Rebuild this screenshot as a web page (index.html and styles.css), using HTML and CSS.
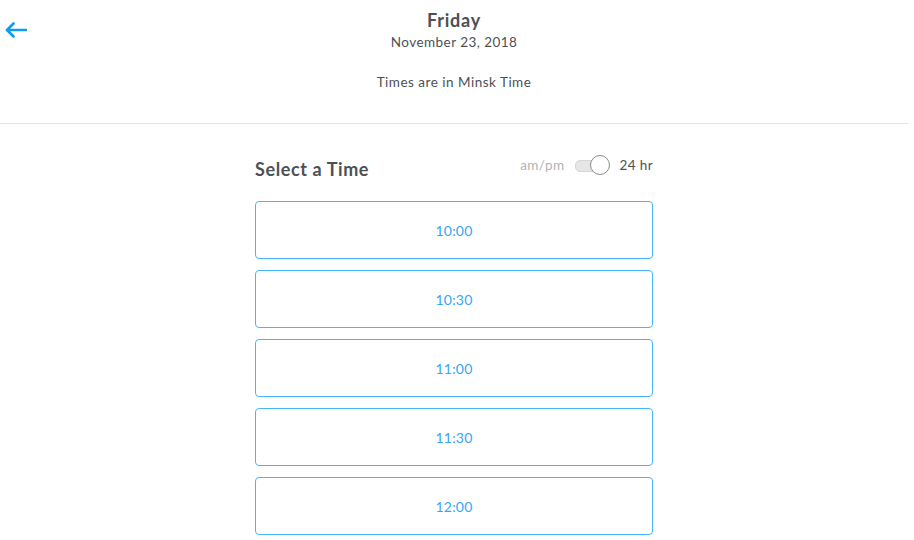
FILE: index.html
```html
<!DOCTYPE html>
<html>
<head>
<meta charset="utf-8">
<link rel="stylesheet" href="styles.css">
</head>
<body>
<div class="page">
  <header class="header">
    <button class="back" aria-label="Back">
      <svg width="22" height="16" viewBox="0 0 22 16"><path d="M21 8H2.5M8.5 1.5L2 8l6.5 6.5" fill="none" stroke="#0d9bf2" stroke-width="2.6" stroke-linecap="round" stroke-linejoin="round"/></svg>
    </button>
    <div class="day">Friday</div>
    <div class="date">November 23, 2018</div>
    <div class="tz">Times are in Minsk Time</div>
  </header>
  <main class="column">
    <div class="column-head">
      <h2 class="title">Select a Time</h2>
      <div class="format">
        <span class="fmt-off">am/pm</span>
        <span class="toggle"><span class="knob"></span></span>
        <span class="fmt-on">24 hr</span>
      </div>
    </div>
    <div class="slots">
      <button class="slot">10:00</button>
      <button class="slot">10:30</button>
      <button class="slot">11:00</button>
      <button class="slot">11:30</button>
      <button class="slot">12:00</button>
    </div>
  </main>
</div>
</body>
</html>
```
FILE: styles.css
```css
* { box-sizing: border-box; }
html, body { margin: 0; padding: 0; background: #fff; }
body { font-family: Lato, "Open Sans", sans-serif; color: #4d5055; overflow: hidden; }
.page { width: 908px; }
.header {
  position: relative;
  text-align: center;
  padding-top: 9px;
  height: 124px;
  border-bottom: 1px solid #e4e4e4;
}
.back {
  position: absolute;
  left: 5px;
  top: 22px;
  border: 0;
  background: none;
  padding: 0;
  width: 24px;
  height: 16px;
  cursor: pointer;
}
.back svg { display: block; }
.day { font-size: 18px; font-weight: 700; line-height: 23px; letter-spacing: 0.8px; }
.date { font-size: 13.5px; line-height: 20px; margin-top: 0; letter-spacing: 0.45px; }
.tz { font-size: 13.5px; line-height: 20px; margin-top: 20px; letter-spacing: 0.5px; }
.column { width: 398px; margin: 0 auto; padding-top: 31px; }
.column-head { display: flex; justify-content: space-between; align-items: center; height: 24px; margin-bottom: 22px; }
.title { margin: 0; font-size: 18px; font-weight: 700; line-height: 24px; position: relative; top: 2px; letter-spacing: 0.6px; }
.format { display: flex; align-items: center; font-size: 13.5px; position: relative; top: -2px; letter-spacing: 0.4px; }
.fmt-off { color: #b3b3b3; margin-right: 11px; }
.fmt-on { margin-left: 9px; }
.toggle { position: relative; width: 35px; height: 20px; display: block; }
.toggle::before { content: ""; position: absolute; left: 0; top: 5px; width: 30px; height: 10px; border-radius: 5px; background: #e6e6e6; border: 1px solid #d6d6d6; }
.knob { position: absolute; right: 0; top: 0; width: 20px; height: 20px; border-radius: 50%; background: #fff; border: 1px solid #8a8a8a; }
.slots { display: flex; flex-direction: column; gap: 11px; }
.slot {
  height: 58px;
  width: 100%;
  border: 1px solid #45b6fc;
  border-radius: 4px;
  background: #fff;
  color: #37a5f5;
  font-family: inherit;
  font-size: 14px;
  letter-spacing: 0.2px;
  padding: 0;
  cursor: pointer;
}
```
